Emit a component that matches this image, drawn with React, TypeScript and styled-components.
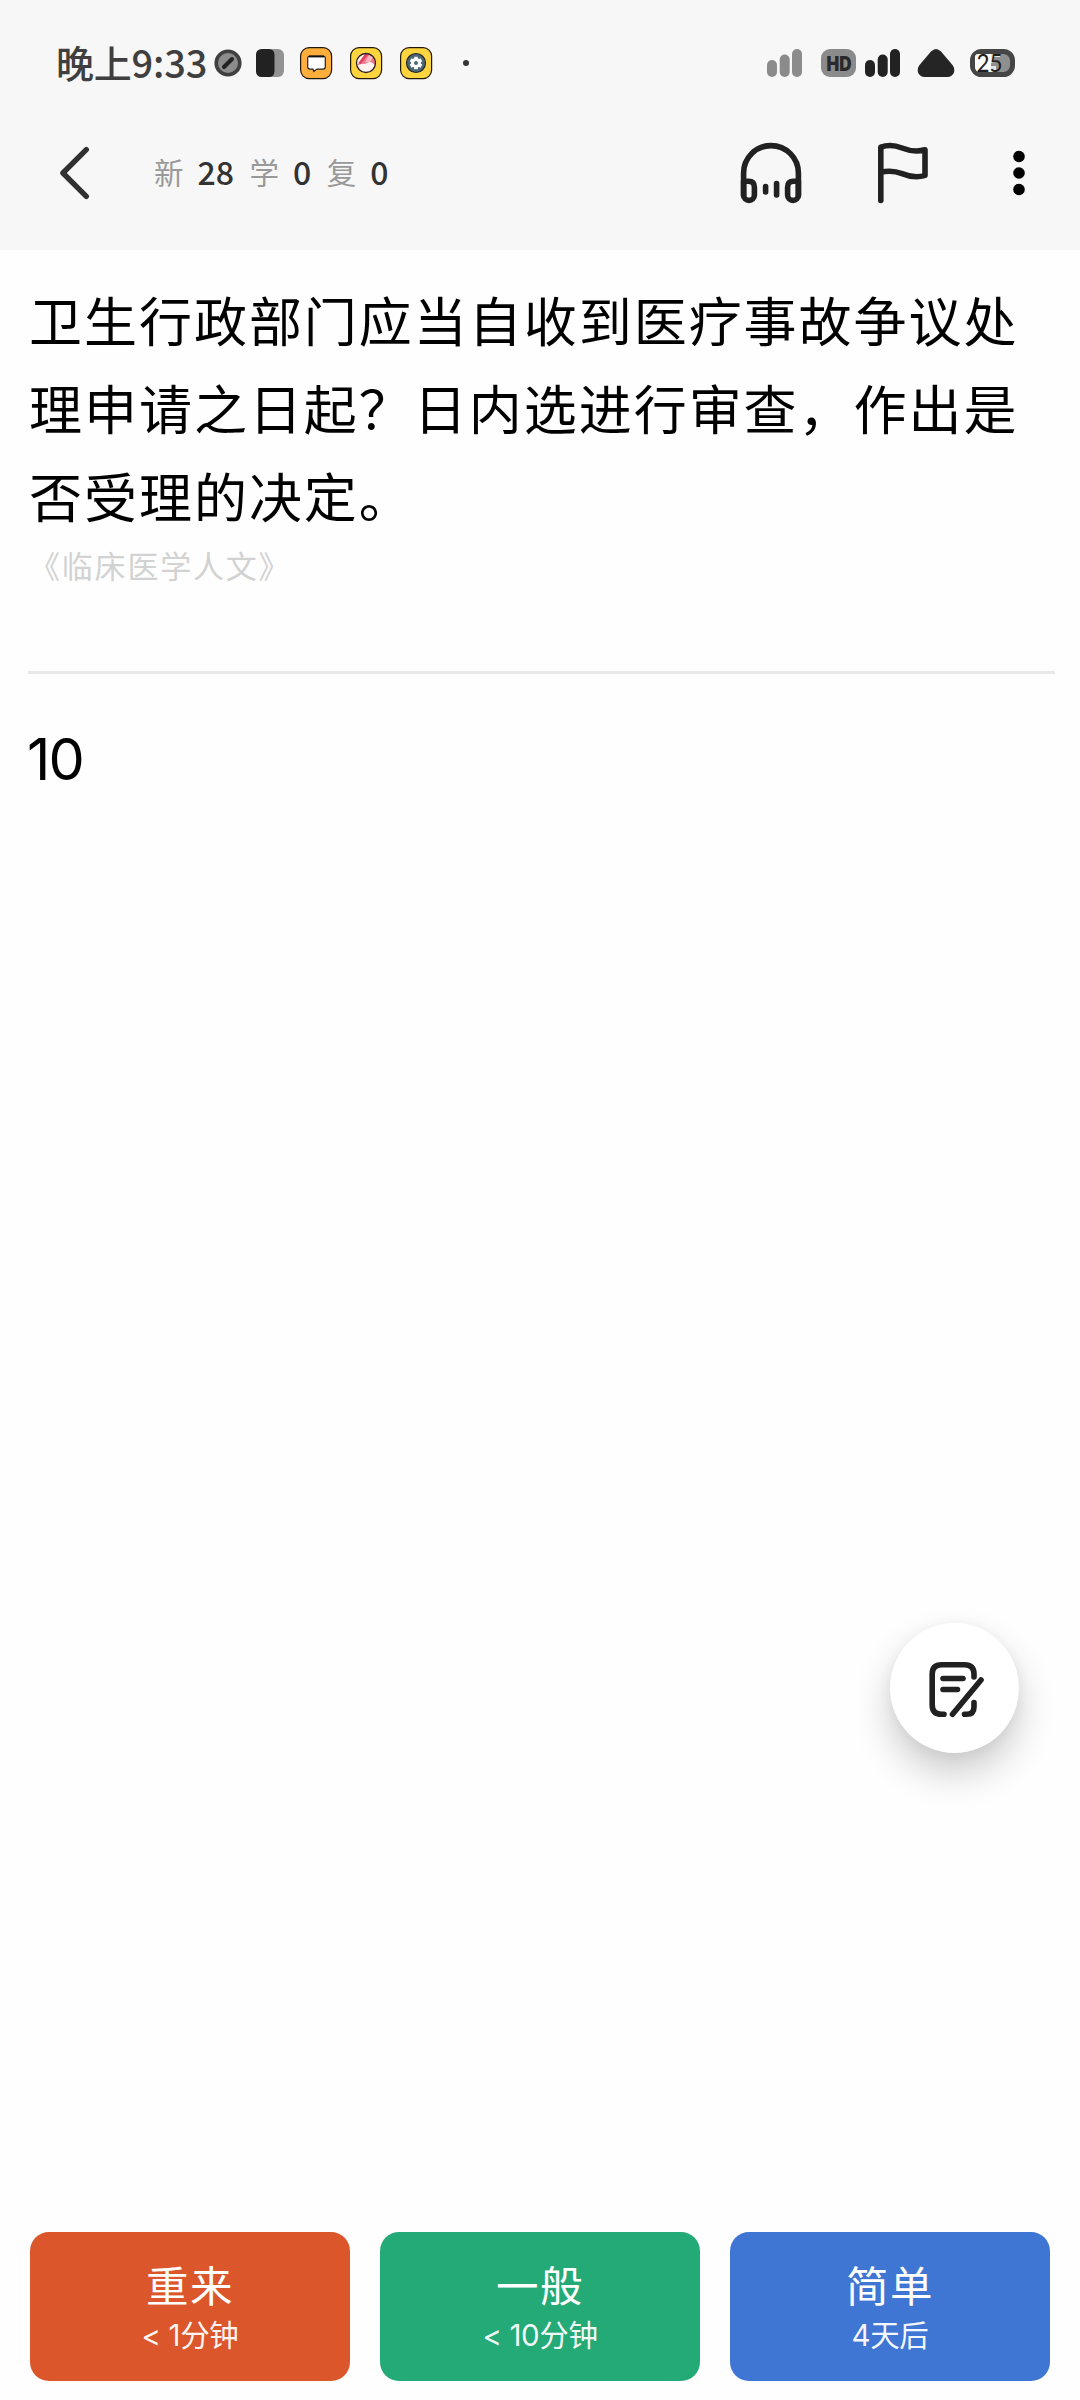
import React from "react";
import styled, { createGlobalStyle } from "styled-components";

const HAN = `"Noto Sans CJK SC", sans-serif`;
const LATIN = `Inter, "Noto Sans CJK SC", sans-serif`;
const INK = "#212121";

const GlobalStyle = createGlobalStyle`
  * { box-sizing: border-box; }
  body { margin: 0; background: #fefefe; font-family: ${HAN}; }
  svg { display: block; flex: none; }
  button { border: 0; padding: 0; background: none; font: inherit; color: inherit; }
`;

const Screen = styled.div`
  width: 1080px;
  height: 2400px;
  display: flex;
  flex-direction: column;
  background: #fefefe;
  position: relative;
  overflow: hidden;
`;

const Header = styled.header`
  flex: none;
  height: 250px;
  background: #f7f7f7;
`;

const StatusBar = styled.div`
  height: 126px;
  padding: 0 64px 0 56px;
  display: flex;
  align-items: center;
  justify-content: space-between;
`;

const StatusGroup = styled.div`
  display: flex;
  align-items: center;
`;

const Clock = styled.span`
  width: 158px;
  padding-bottom: 3px;
  font-size: 38px;
  line-height: 50px;
  font-weight: 500;
  letter-spacing: -0.2px;
  color: #3f3f3f;
  white-space: nowrap;
`;

const NavBar = styled.nav`
  height: 94px;
  display: flex;
  align-items: center;
  padding: 0 42px 0 54px;
`;

const IconButton = styled.button<{ $ml?: number }>`
  margin-left: ${(p) => p.$ml ?? 0}px;
  flex: none;
`;

const Counters = styled.div`
  flex: 1;
  margin-left: 62px;
  padding-bottom: 5px;
  display: flex;
  align-items: center;
`;

const CounterLabel = styled.span`
  width: 43.5px;
  font-size: 29.5px;
  line-height: 44px;
  color: #999;
`;

const CounterValue = styled.span`
  font-size: 32px;
  line-height: 44px;
  font-weight: 500;
  color: #333;
  margin-right: 15.5px;
`;

const Card = styled.main`
  flex: 1;
  padding: 25px 25px 0 28px;
`;

const Question = styled.p`
  margin: 0 0 0 1px;
  font-size: 53px;
  line-height: 88px;
  letter-spacing: 1.97px;
  color: #000;
`;

const Source = styled.p`
  margin: 1px 0 0 1px;
  font-size: 31px;
  line-height: 50px;
  letter-spacing: 1.8px;
  color: #d2d2d2;
`;

const Divider = styled.hr`
  margin: 81px 0 0;
  border: 0;
  height: 3px;
  background: #e8e8e8;
`;

const Answer = styled.p`
  margin: 50px 0 0 -1px;
  font-family: ${LATIN};
  font-size: 57.5px;
  line-height: 70px;
  letter-spacing: -2px;
  color: #000;
`;

const NoteButton = styled.button`
  position: absolute;
  left: 890px;
  top: 1623px;
  width: 129px;
  height: 130px;
  border-radius: 50%;
  background: #fff;
  box-shadow: 0 20px 38px rgba(0, 0, 0, 0.2), 0 2px 14px rgba(0, 0, 0, 0.05);
  padding: 3px 0 0 5px;
  display: flex;
  align-items: center;
  justify-content: center;
`;

const Grades = styled.footer`
  flex: none;
  display: grid;
  grid-template-columns: repeat(3, 1fr);
  gap: 30px;
  padding: 0 30px 19px;
`;

const GradeButton = styled.button<{ $color: string }>`
  height: 149px;
  border-radius: 19px;
  background: ${(p) => p.$color};
  color: #fff;
  display: flex;
  flex-direction: column;
  align-items: center;
  justify-content: center;
`;

const GradeName = styled.span`
  font-size: 42.5px;
  line-height: 56px;
  padding-bottom: 2px;
  letter-spacing: 1.5px;
`;

const GradeDelay = styled.span`
  font-family: ${LATIN};
  font-size: 29.5px;
  line-height: 42px;
  padding-bottom: 2px;
  letter-spacing: -0.4px;
  color: rgba(255, 255, 255, 0.95);
`;

/* Do-not-disturb disc, theme chip, three app notifications and the overflow dot. */
const NotificationIcons = () => (
  <svg width="262" height="36" viewBox="0 0 262 36">
    <circle cx="14" cy="18" r="11.8" fill="#8c8c8c" stroke="#404040" strokeWidth="3.6" />
    <path d="M10 22 18 14" stroke="#222" strokeWidth="4" strokeLinecap="round" />
    <rect x="50" y="4" width="20" height="28" rx="6" fill="#939393" />
    <rect x="42" y="4" width="18.5" height="28" rx="5.5" fill="#222" />
    <rect x="86.6" y="2.6" width="31" height="31" rx="8.5" fill="#ffae3b" stroke="#20180a" strokeWidth="1.2" />
    <path d="M96 11h13q2.300 0 2.300 2.300v8.500q0 2.300-2.300 2.300h-6l-3.200 2.400-.8-2.400h-3q-2.300 0-2.300-2.300v-8.500Q93.700 11 96 11Z" fill="#fff" stroke="#222" strokeWidth="1.200" />
    <path d="M95 11.500h15" stroke="#111" strokeWidth="1.800" />
    <rect x="136.600" y="2.600" width="31" height="31" rx="8.500" fill="#fed53e" stroke="#20180a" strokeWidth="1.200" />
    <circle cx="152" cy="18" r="9.500" fill="#fff4f2" />
    <path d="M143 20.500 151 9q5-1.500 8.200 2.500 3 4 2.200 9.500-3.500-4.500-6.500-3.800-2.500 1-4.200 1.800-3-1-7.700 1.500Z" fill="#f0788c" />
    <path d="m151 17.500 4.500-8.500 4 2.500-3.500 5.500Z" fill="#fbb7bd" />
    <path d="m145.500 18.500 7-9" stroke="#e0405f" strokeWidth="2.600" />
    <circle cx="152" cy="18" r="9.500" fill="none" stroke="#2b2020" strokeWidth="1.300" />
    <rect x="186.600" y="2.600" width="31" height="31" rx="8.500" fill="#fed53e" stroke="#20180a" strokeWidth="1.200" />
    <circle cx="202" cy="18" r="9.500" fill="#4c6674" stroke="#252a2c" strokeWidth="1.200" />
    {[0, 60, 120].map((a) => (
      <path key={a} d="M202 11.800v12.400" transform={`rotate(${a} 202 18)`} stroke="#fff" strokeWidth="3.600" />
    ))}
    <circle cx="202" cy="18" r="5" fill="#fff" />
    <circle cx="202" cy="18" r="2" fill="#4c6674" />
    <circle cx="252" cy="18" r="3" fill="#333" />
  </svg>
);

const SignalBars = ({ x, color }: { x: number; color: string }) => (
  <g fill={color}>
    <rect x={x} y="15" width="10" height="17" rx="5" />
    <rect x={x + 12.7} y="9.500" width="10" height="22.500" rx="5" />
    <rect x={x + 25} y="4" width="10" height="28" rx="5" />
  </g>
);

const SystemIcons = () => (
  <svg width="250" height="36" viewBox="0 0 250 36">
    <SignalBars x={1} color="#8b8b8b" />
    <rect x="55" y="4" width="35" height="28" rx="9" fill="#8b8b8b" />
    <text x="73" y="25.500" textAnchor="middle" fontFamily="Inter, sans-serif" fontWeight="900" fontSize="20" textLength="25" lengthAdjust="spacingAndGlyphs" fill="#292929">HD</text>
    <SignalBars x={99} color="#222" />
    <path d="M165 6.500q5-5 10 0l11.500 13.500c4 5 1 12-5 12h-23c-6 0-9-7-5-12Z" fill="#252525" />
    <rect x="206.500" y="6.500" width="40" height="23" rx="9" fill="#8f8f8f" stroke="#454545" strokeWidth="5" />
    <path d="M212 9h13v18h-11q-5 0-5-5v-10q0-3 3-3Z" fill="#fff" />
    <path d="M225 9h9v3h-6v6h-3ZM225 21h5v4l-3 2h-2Z" fill="#e4e4e4" />
    <text x="223.500" y="27" textAnchor="middle" fontFamily="Lato, sans-serif" fontSize="25" textLength="26" lengthAdjust="spacingAndGlyphs" fill="#202020">25</text>
  </svg>
);

const BackIcon = () => (
  <svg width="38" height="56" viewBox="0 0 38 56" fill="none" stroke="#303030" strokeWidth="5.400" strokeLinecap="round" strokeLinejoin="round">
    <path d="M32.300 4.600 8.900 28l23.400 23.400" />
  </svg>
);

const HeadphonesIcon = () => (
  <svg width="62" height="62" viewBox="0 0 62 62" fill="none" stroke={INK} strokeWidth="5.600" strokeLinecap="round" strokeLinejoin="round">
    <path d="M3.600 53.500V31a27.400 27.400 0 0 1 54.800 0v22.500" />
    <path d="M3.600 39.300h5q5.800 0 5.800 6v7.700a5.400 5.400 0 0 1-10.800 0Z" />
    <path d="M58.400 39.300h-5q-5.800 0-5.800 6v7.700a5.400 5.400 0 0 0 10.800 0Z" />
    <path d="M25.600 44.500v5.500M36.600 41.500V53" />
  </svg>
);

const FlagIcon = () => (
  <svg width="52" height="62" viewBox="0 0 52 62" fill="none" stroke={INK} strokeWidth="5.600" strokeLinecap="round" strokeLinejoin="round">
    <path d="M3.800 58.500V5.200C11 2.500 18.500 3.400 25 6c8 3.200 15 4 23 1.800v25.600c-8 2.600-15 1.500-23-1.800-6.500-2.500-14-3-21.200-1.300" />
  </svg>
);

const MoreIcon = () => (
  <svg width="38" height="48" viewBox="0 0 38 48" fill="#000">
    <circle cx="19" cy="7.500" r="5.800" />
    <circle cx="19" cy="24" r="5.800" />
    <circle cx="19" cy="40.500" r="5.800" />
  </svg>
);

const NoteIcon = () => (
  <svg width="56" height="58" viewBox="0 0 56 58" fill="none" stroke={INK} strokeWidth="5.600" strokeLinecap="round" strokeLinejoin="round">
    <path d="M45 16v-3q0-9.300-9.300-9.300H12.500Q3.200 3.700 3.200 13v31q0 9.300 9.300 9.300H15" />
    <path d="M45 41.500V46q0 7.300-7.300 7.300H35.500" />
    <path d="M14 17.500h20M14 28.500h14.500" />
    <path d="M52 19 23.500 53.300" />
  </svg>
);

const counters = [
  { label: "新", value: 28 },
  { label: "学", value: 0 },
  { label: "复", value: 0 },
];

const grades = [
  { name: "重来", delay: "< 1分钟", color: "#db572b" },
  { name: "一般", delay: "< 10分钟", color: "#24aa77" },
  { name: "简单", delay: "4天后", color: "#3f75d3" },
];

export default function App() {
  return (
    <>
      <GlobalStyle />
      <Screen>
        <Header>
          <StatusBar>
            <StatusGroup>
              <Clock>晚上9:33</Clock>
              <NotificationIcons />
            </StatusGroup>
            <SystemIcons />
          </StatusBar>
          <NavBar>
            <IconButton aria-label="返回"><BackIcon /></IconButton>
            <Counters>
              {counters.map((c) => (
                <React.Fragment key={c.label}>
                  <CounterLabel>{c.label}</CounterLabel>
                  <CounterValue>{c.value}</CounterValue>
                </React.Fragment>
              ))}
            </Counters>
            <IconButton aria-label="朗读"><HeadphonesIcon /></IconButton>
            <IconButton $ml={75} aria-label="标记"><FlagIcon /></IconButton>
            <IconButton $ml={71} aria-label="更多"><MoreIcon /></IconButton>
          </NavBar>
        </Header>
        <Card>
          <Question>卫生行政部门应当自收到医疗事故争议处理申请之日起？日内选进行审查，作出是否受理的决定。</Question>
          <Source>《临床医学人文》</Source>
          <Divider />
          <Answer>10</Answer>
        </Card>
        <NoteButton aria-label="笔记"><NoteIcon /></NoteButton>
        <Grades>
          {grades.map((g) => (
            <GradeButton key={g.name} $color={g.color}>
              <GradeName>{g.name}</GradeName>
              <GradeDelay>{g.delay}</GradeDelay>
            </GradeButton>
          ))}
        </Grades>
      </Screen>
    </>
  );
}
